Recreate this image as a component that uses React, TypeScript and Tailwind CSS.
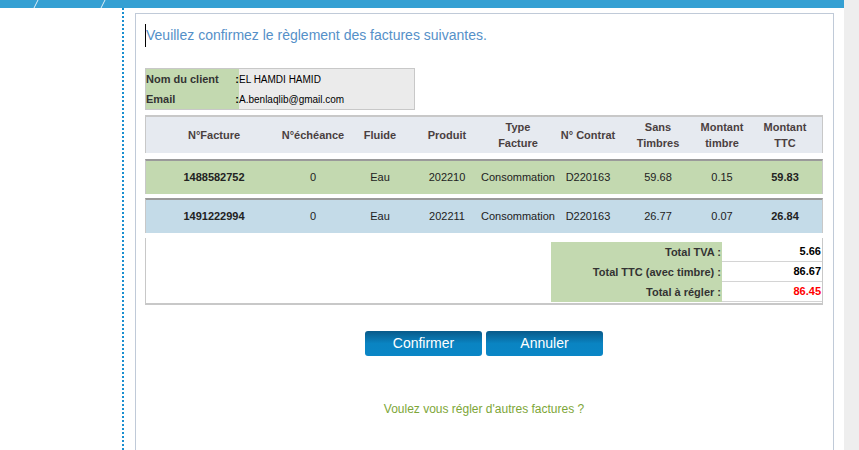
import React from 'react';

const cols = [
  { label: ['N°Facture'], w: 'w-[136px]' },
  { label: ['N°échéance'], w: 'w-[62px]' },
  { label: ['Fluide'], w: 'w-[72px]' },
  { label: ['Produit'], w: 'w-[62px]' },
  { label: ['Type', 'Facture'], w: 'w-[80px]' },
  { label: ['N° Contrat'], w: 'w-[60px]' },
  { label: ['Sans', 'Timbres'], w: 'w-[80px]' },
  { label: ['Montant', 'timbre'], w: 'w-[48px]' },
  { label: ['Montant', 'TTC'], w: 'w-[78px]' },
];

const factures = [
  { cells: ['1488582752', '0', 'Eau', '202210', 'Consommation', 'D220163', '59.68', '0.15', '59.83'], bg: 'bg-[#c3d9b0]', mt: 'mt-[6px]' },
  { cells: ['1491222994', '0', 'Eau', '202211', 'Consommation', 'D220163', '26.77', '0.07', '26.84'], bg: 'bg-[#c4dbe8]', mt: 'mt-[4px]' },
];

const totaux = [
  { label: 'Total TVA :', value: '5.66', red: false },
  { label: 'Total TTC (avec timbre) :', value: '86.67', red: false },
  { label: 'Total à régler :', value: '86.45', red: true },
];

export default function App() {
  return (
    <div className="w-[859px] h-[450px] flex overflow-hidden bg-white font-['Liberation_Sans',Arial,sans-serif]">
      <div className="w-[844px] flex flex-col">
        {/* bandeau du haut */}
        <div className="relative h-[8px] bg-[#35a0d3]">
          <svg className="absolute left-0 top-0" width="120" height="8" viewBox="0 0 120 8">
            <line x1="34" y1="8" x2="38" y2="0" stroke="#dfeef7" strokeWidth="1" />
            <line x1="101" y1="8" x2="105" y2="0" stroke="#dfeef7" strokeWidth="1" />
          </svg>
        </div>

        <div className="flex flex-1">
          <div className="w-[124px] border-r-2 border-dotted border-[#1a8fd0]" />

          <div className="ml-[11px] mt-[5px] w-[699px] border border-[#c0cad8] border-b-0 pl-[9px] pr-[10px]">
            <div className="mt-[10px] h-[23px] flex items-center">
              <span className="w-px h-[23px] bg-black" />
              <span className="text-[14px] text-[#5590c8] leading-[23px]">
                Veuillez confirmez le règlement des factures suivantes.
              </span>
            </div>

            {/* infos client */}
            <div className="mt-[21px] w-[270px] border border-[#c8c8c8] bg-[#ebebeb] flex">
              <div className="w-[93px] bg-[#c3d9b0] text-[11px] font-bold text-[#333]">
                <div className="h-[20px] flex items-center justify-between">
                  <span>Nom du client</span>
                  <span className="text-black">:</span>
                </div>
                <div className="h-[20px] flex items-center justify-between">
                  <span>Email</span>
                  <span className="text-black">:</span>
                </div>
              </div>
              <div className="text-[10px] text-black">
                <div className="h-[20px] flex items-center">EL HAMDI HAMID</div>
                <div className="h-[20px] flex items-center">A.benlaqlib@gmail.com</div>
              </div>
            </div>

            {/* tableau des factures */}
            <div className="mt-[5px] w-[678px]">
              <div className="flex h-[38px] border-t-2 border-[#c8c8c8] border-l border-l-[#c8c8c8] border-r border-r-[#c8c8c8] bg-[#e6eaf0]">
                {cols.map((c, i) => (
                  <div
                    key={i}
                    className={`${c.w} shrink-0 flex flex-col items-center justify-center text-[11px] font-bold text-[#4a3f3f] leading-[16px] whitespace-nowrap`}
                  >
                    {c.label.map((l) => (
                      <span key={l}>{l}</span>
                    ))}
                  </div>
                ))}
              </div>

              {factures.map((f, r) => (
                <div
                  key={r}
                  className={`${f.mt} flex h-[35px] border-t-2 border-t-[#9a9a9a] border-l border-l-[#c8c8c8] border-r border-r-[#c8c8c8] ${f.bg}`}
                >
                  {f.cells.map((v, i) => (
                    <div
                      key={i}
                      className={`${cols[i].w} shrink-0 flex items-center justify-center text-[11px] text-[#222] whitespace-nowrap ${i === 0 || i === 8 ? 'font-bold' : ''}`}
                    >
                      {v}
                    </div>
                  ))}
                </div>
              ))}

              {/* totaux */}
              <div className="mt-[5px] h-[67px] border-l border-r border-b-2 border-[#c8c8c8] pt-[4px] flex justify-end">
                <div className="flex flex-col">
                  {totaux.map((t) => (
                    <div key={t.label} className="flex h-[20px]">
                      <div className="w-[171px] bg-[#c3d9b0] flex items-center justify-end pr-[1px] text-[11px] font-bold text-[#333]">
                        {t.label}
                      </div>
                      <div
                        className={`w-[100px] bg-white border-b border-[#d4d4d4] flex items-center justify-end pr-[1px] text-[11px] font-bold ${t.red ? 'text-[#ff0000]' : 'text-black'}`}
                      >
                        {t.value}
                      </div>
                    </div>
                  ))}
                </div>
              </div>
            </div>

            {/* boutons */}
            <div className="mt-[26px] flex justify-center gap-[4px]">
              <button className="w-[117px] h-[25px] rounded-[3px] bg-gradient-to-b from-[#085a8a] via-[#0a84c2] to-[#0a86c6] text-white text-[14px]">
                Confirmer
              </button>
              <button className="w-[117px] h-[25px] rounded-[3px] bg-gradient-to-b from-[#085a8a] via-[#0a84c2] to-[#0a86c6] text-white text-[14px]">
                Annuler
              </button>
            </div>

            <div className="mt-[44px] text-center text-[12px] text-[#7da638]">
              Voulez vous régler d'autres factures ?
            </div>
          </div>
        </div>
      </div>
      <div className="flex-1 bg-[#eeeeee]" />
    </div>
  );
}
